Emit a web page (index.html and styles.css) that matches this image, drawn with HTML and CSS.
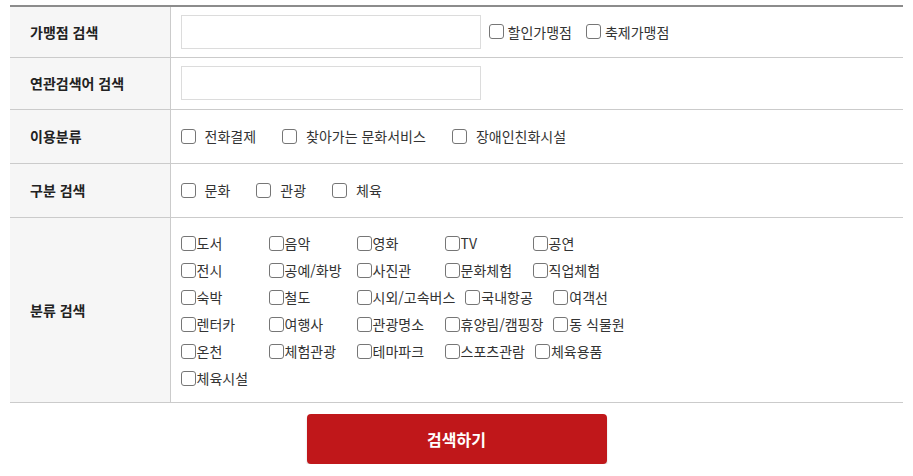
FILE: index.html
```html
<!DOCTYPE html>
<html lang="ko">
<head>
<meta charset="utf-8">
<title>가맹점 검색</title>
<link rel="stylesheet" href="styles.css">
</head>
<body>
<div class="wrap">
  <table class="search-table">
    <tr class="row-input">
      <th>가맹점 검색</th>
      <td>
        <div class="inline">
          <input type="text" class="text-input">
          <label class="chk chk-tight first"><span class="box"></span>할인가맹점</label>
          <label class="chk chk-tight"><span class="box"></span>축제가맹점</label>
        </div>
      </td>
    </tr>
    <tr class="row-input row-input-2">
      <th>연관검색어 검색</th>
      <td><input type="text" class="text-input"></td>
    </tr>
    <tr class="row-chk">
      <th>이용분류</th>
      <td>
        <div class="inline">
          <label class="chk chk-wide"><span class="box"></span>전화결제</label>
          <label class="chk chk-wide"><span class="box"></span>찾아가는 문화서비스</label>
          <label class="chk chk-wide"><span class="box"></span>장애인친화시설</label>
        </div>
      </td>
    </tr>
    <tr class="row-chk">
      <th>구분 검색</th>
      <td>
        <div class="inline">
          <label class="chk chk-wide"><span class="box"></span>문화</label>
          <label class="chk chk-wide"><span class="box"></span>관광</label>
          <label class="chk chk-wide"><span class="box"></span>체육</label>
        </div>
      </td>
    </tr>
    <tr class="row-cat">
      <th>분류 검색</th>
      <td>
        <div class="cat-row">
          <label class="cat"><span class="box"></span>도서</label>
          <label class="cat"><span class="box"></span>음악</label>
          <label class="cat"><span class="box"></span>영화</label>
          <label class="cat"><span class="box"></span>TV</label>
          <label class="cat"><span class="box"></span>공연</label>
        </div>
        <div class="cat-row">
          <label class="cat"><span class="box"></span>전시</label>
          <label class="cat"><span class="box"></span>공예/화방</label>
          <label class="cat"><span class="box"></span>사진관</label>
          <label class="cat"><span class="box"></span>문화체험</label>
          <label class="cat"><span class="box"></span>직업체험</label>
        </div>
        <div class="cat-row">
          <label class="cat"><span class="box"></span>숙박</label>
          <label class="cat"><span class="box"></span>철도</label>
          <label class="cat"><span class="box"></span>시외/고속버스</label>
          <label class="cat"><span class="box"></span>국내항공</label>
          <label class="cat"><span class="box"></span>여객선</label>
        </div>
        <div class="cat-row">
          <label class="cat"><span class="box"></span>렌터카</label>
          <label class="cat"><span class="box"></span>여행사</label>
          <label class="cat"><span class="box"></span>관광명소</label>
          <label class="cat"><span class="box"></span>휴양림/캠핑장</label>
          <label class="cat"><span class="box"></span>동 식물원</label>
        </div>
        <div class="cat-row">
          <label class="cat"><span class="box"></span>온천</label>
          <label class="cat"><span class="box"></span>체험관광</label>
          <label class="cat"><span class="box"></span>테마파크</label>
          <label class="cat"><span class="box"></span>스포츠관람</label>
          <label class="cat"><span class="box"></span>체육용품</label>
        </div>
        <div class="cat-row">
          <label class="cat"><span class="box"></span>체육시설</label>
        </div>
      </td>
    </tr>
  </table>
  <div class="btn-area">
    <button type="button" class="btn-search">검색하기</button>
  </div>
</div>
</body>
</html>
```

FILE: styles.css
```css
* { box-sizing: border-box; }
html, body { margin: 0; padding: 0; background: #fff; }
body {
  font-family: "Noto Sans CJK KR", "Noto Sans", sans-serif;
  font-size: 14px;
  color: #333;
}
.wrap { padding: 5px 10px 0 10px; }

.search-table {
  width: 893px;
  border-collapse: collapse;
  border-top: 2px solid #8c8c8c;
}
.search-table th {
  width: 160px;
  background: #f6f6f6;
  text-align: left;
  padding: 0 0 0 20px;
  font-weight: bold;
  font-size: 14px;
  color: #222;
  border-bottom: 1px solid #cbcbcb;
  border-right: 1px solid #cbcbcb;
}
.search-table td {
  padding: 0 10px;
  border-bottom: 1px solid #cbcbcb;
  vertical-align: middle;
}
.row-input td { height: 51px; }
.row-input-2 td { height: 52px; }
.row-chk td { height: 54px; }
.row-cat td { padding: 12px 10px 10px 10px; }

.text-input {
  display: block;
  width: 300px;
  height: 34px;
  border: 1px solid #dcdcdc;
  background: #fff;
  margin: 0;
  padding: 0 8px;
}

.inline { display: flex; align-items: center; }

.box {
  display: inline-block;
  width: 15px;
  height: 15px;
  border: 1px solid #767676;
  border-radius: 3px;
  background: #fff;
  flex: none;
}
.chk {
  display: inline-flex;
  align-items: center;
  line-height: 20px;
  white-space: nowrap;
}
.chk-tight .box { margin-right: 4px; }
.chk-tight { margin-right: 14px; }
.chk-tight.first { margin-left: 8px; }
.chk-wide .box { margin-right: 9px; }
.chk-wide { margin-right: 26px; }

.cat-row {
  display: flex;
  height: 27px;
}
.cat {
  display: inline-flex;
  align-items: center;
  min-width: 78px;
  margin-right: 10px;
  white-space: nowrap;
}
.cat .box { margin-right: 1px; }

.btn-area {
  display: flex;
  justify-content: center;
  padding-top: 11px;
}
.btn-search {
  width: 300px;
  height: 50px;
  border: 0;
  border-radius: 4px;
  background: #c0171a;
  color: #fff;
  font-family: "Noto Sans CJK KR", "Noto Sans", sans-serif;
  font-size: 16px;
  font-weight: bold;
  box-shadow: 0 2px 2px rgba(0,0,0,0.18);
  cursor: pointer;
}
```
